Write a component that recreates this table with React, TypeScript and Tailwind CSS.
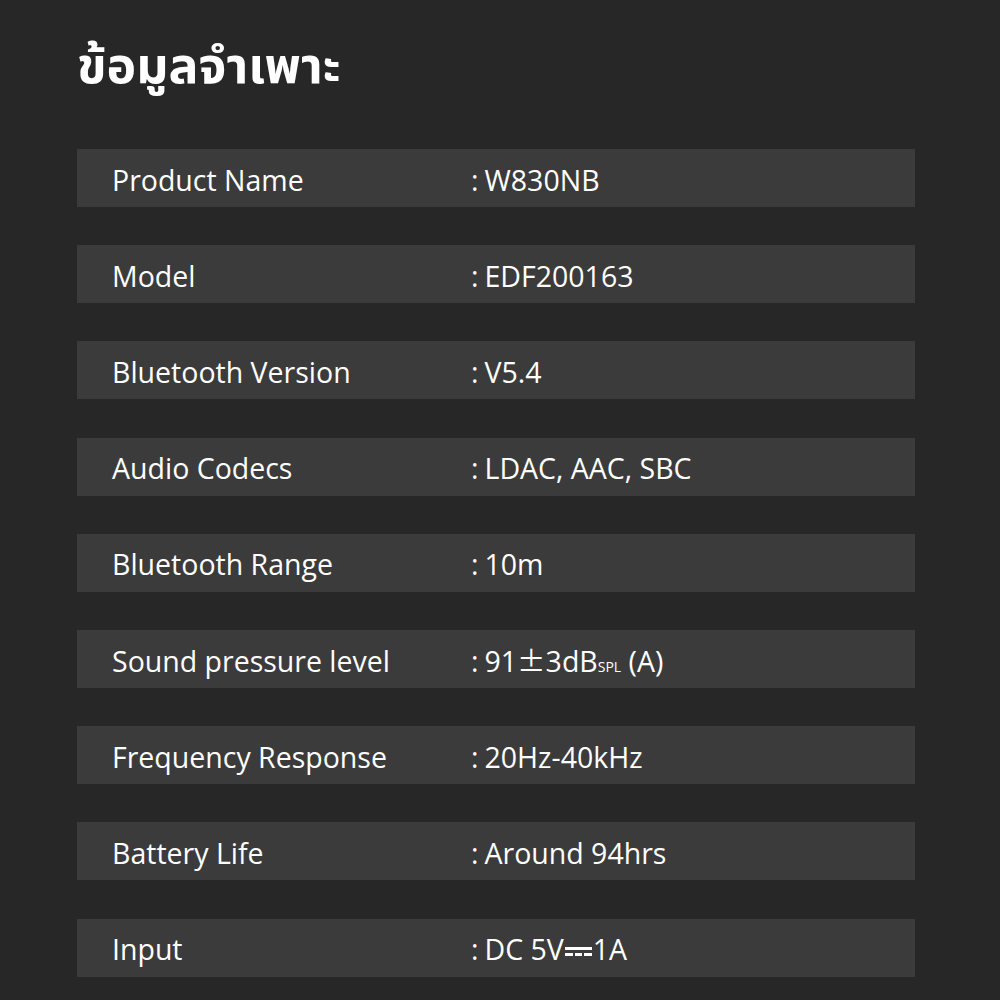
const specs: { label: string; value: React.ReactNode }[] = [
  { label: "Product Name", value: "W830NB" },
  { label: "Model", value: "EDF200163" },
  { label: "Bluetooth Version", value: "V5.4" },
  { label: "Audio Codecs", value: "LDAC, AAC, SBC" },
  { label: "Bluetooth Range", value: "10m" },
  {
    label: "Sound pressure level",
    value: (
      <>
        91
        <span style={{ fontFamily: '"Noto Sans CJK SC", sans-serif' }} className="font-normal">
          ±
        </span>
        3dB<span className="text-[14px] align-baseline">SPL</span> (A)
      </>
    ),
  },
  { label: "Frequency Response", value: "20Hz-40kHz" },
  { label: "Battery Life", value: "Around 94hrs" },
  {
    label: "Input",
    value: (
      <>
        DC 5V
        <span className="inline-flex flex-col gap-[3px] w-[27px] mx-[1px] align-middle -mt-[2px]">
          <span className="h-[3px] bg-white" />
          <span className="flex gap-[2px]">
            <span className="h-[3px] flex-1 bg-white" />
            <span className="h-[3px] flex-1 bg-white" />
            <span className="h-[3px] flex-1 bg-white" />
          </span>
        </span>
        1A
      </>
    ),
  },
];

export default function App() {
  return (
    <div
      className="w-[1000px] h-[1000px] bg-[#272727] text-white overflow-hidden px-[77px] pt-[26px]"
      style={{ fontFamily: '"Open Sans", "Noto Sans", "Noto Sans Thai", sans-serif' }}
    >
      <h1 className="text-[50px] font-bold leading-[76px] h-[123px]">ข้อมูลจำเพาะ</h1>
      <div className="flex flex-col gap-[38.2px] w-[838px]">
        {specs.map((s) => (
          <div
            key={s.label}
            className="h-[58px] bg-[#3b3b3b] flex items-center pl-[35px] pt-[4px] text-[28.5px] font-medium"
          >
            <div className="w-[359px]">{s.label}</div>
            <div className="flex items-baseline">
              <span className="mr-[6px]">:</span>
              <span>{s.value}</span>
            </div>
          </div>
        ))}
      </div>
    </div>
  );
}
